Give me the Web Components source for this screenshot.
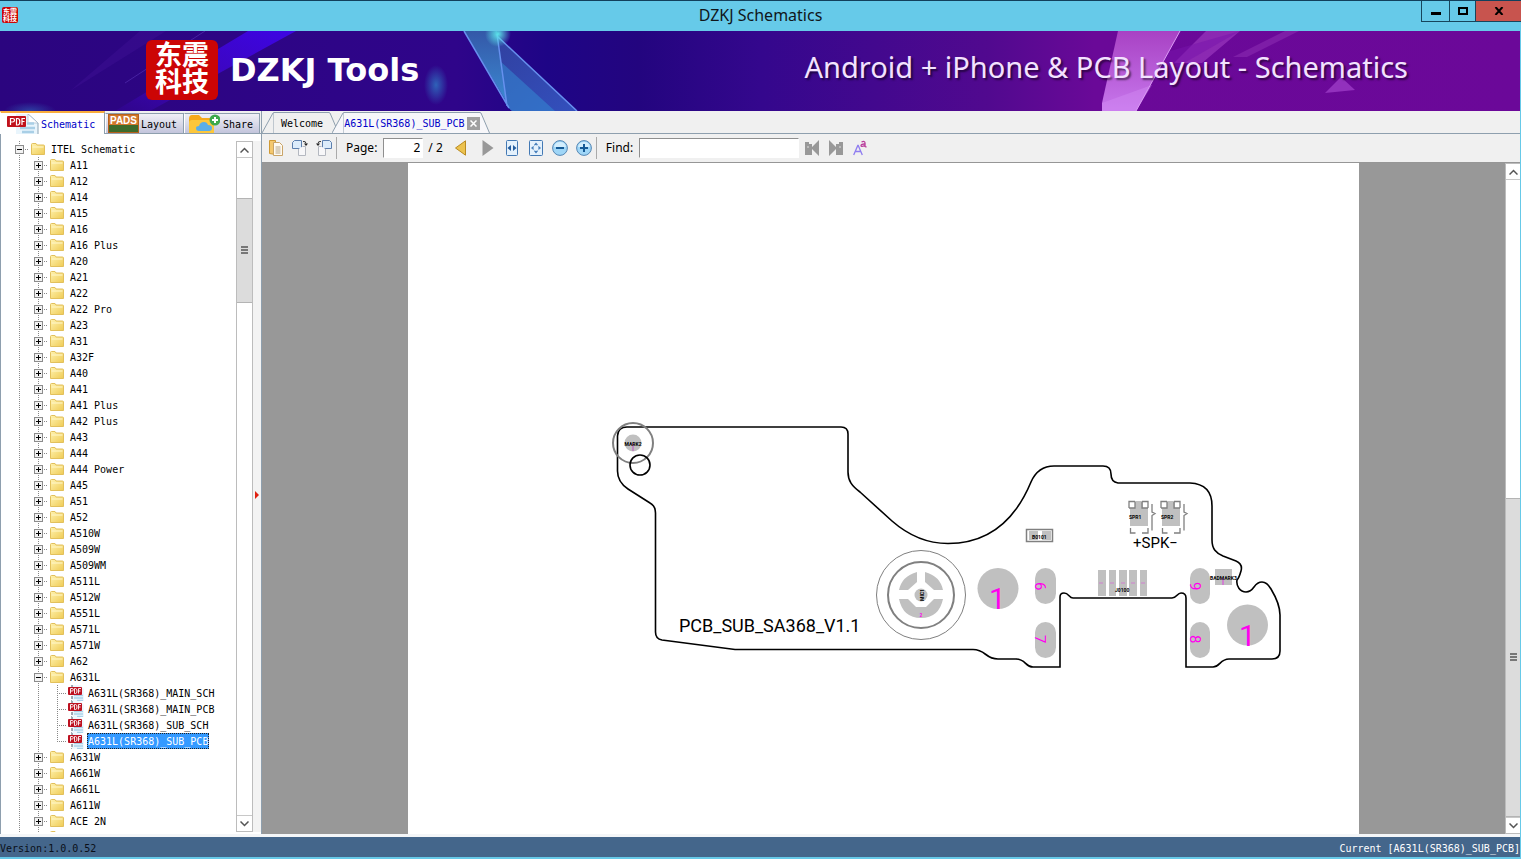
<!DOCTYPE html>
<html lang="en">
<head>
<meta charset="utf-8">
<title>DZKJ Schematics</title>
<style>
html, body { margin: 0; height: 100%; }
body { font: 10px/16px "DejaVu Sans Mono", "Liberation Mono", monospace; color: #000; background: #66c9e8; overflow: hidden; }
</style>
</head>
<body>
<dz-app></dz-app>
<script>
const BASE = `<style>
*{box-sizing:border-box}
button{font:inherit;color:inherit;margin:0;padding:0;border:0;background:none;display:flex;align-items:center;justify-content:center}
svg{display:block;flex:none}
</style>`;
function define(name, html, setup) {
  const t = document.createElement('template');
  t.innerHTML = BASE + html;
  customElements.define(name, class extends HTMLElement {
    connectedCallback() {
      if (this.shadowRoot) return;
      this.attachShadow({ mode: 'open' }).append(t.content.cloneNode(true));
      if (setup) setup.call(this, this.shadowRoot);
    }
  });
}

/* Icons shared by the tabs, the tree and the toolbar */
const ICONS = {
  folder: `<svg width="14" height="14" viewBox="0 0 14 14"><defs><linearGradient id="f" x1="0" y1="0" x2="1" y2="1"><stop offset="0" stop-color="#fff3b0"/><stop offset="1" stop-color="#efcb55"/></linearGradient></defs><path d="M.5 12.500V2.500q0-1 1-1h3.500l1 1.500h6.500q1 0 1 1v8.500z" fill="url(#f)" stroke="#e2c05c"/><path d="M1.500 5h11" stroke="#fff7cc"/></svg>`,
  pdf: `<svg width="16" height="16" viewBox="0 0 16 16"><path d="M4 0h8l4 4v12H4z" fill="#eef7fd"/><path d="M4 0v2M4 11v3M3.500 15.500v.5" stroke="#456"/><path d="M6 10.500h9M6 13h9M9 15.500h6" stroke="#a9d3ea" stroke-width="1.500"/><rect x="0" y="2" width="14" height="8" rx="1" fill="#bd1120"/><path d="M2.500 8.500v-5h1.800q1 0 1 1.200t-1 1.300H2.500M6.500 3.500v5h1q1.500 0 1.500-2.500T7.500 3.500zM10.500 8.500v-5h2.500M10.500 6h2" fill="none" stroke="#fff" stroke-width=".9"/></svg>`,
  pdfbig: `<svg width="32" height="20" viewBox="0 0 32 20"><path d="M9 0h12l10 9v11H9z" fill="#e9f5fc"/><path d="M21 0l10 9v11" fill="none" stroke="#8aa3b5"/><path d="M21 0v9h10z" fill="#fff" stroke="#a8bccb" stroke-width=".7"/><path d="M20 9.500h7M13 14h15M15 18h12" stroke="#a9cfe6" stroke-width="2.500"/><rect x="0" y="2" width="19" height="11" rx="1" fill="#c1121c"/><path d="M3.500 11V4.500h2q2 0 2 1.700T5.500 8h-2M9.500 4.500V11h1.300q2 0 2-3.200t-2-3.300zM15 11V4.500h3M15 7.500h2.500" fill="none" stroke="#fff" stroke-width="1.200"/></svg>`,
  share: `<svg width="31" height="19" viewBox="0 0 31 19"><path d="M0 19V5q0-4 3-4h7l3 3h8q4 0 4 4v11z" fill="#f6a91b"/><path d="M0 19V9q0-3 3-3h19q3 0 3 3v10z" fill="#fdc73a"/><path d="M10 17q-3 0-3-3 0-2 3-2 1-4 5-4 3 0 4 3 4 0 4 3t-3 3z" fill="#5aaee8"/><circle cx="26" cy="6" r="5.500" fill="#3da94a"/><path d="M26 3v6M23 6h6" stroke="#fff" stroke-width="2"/></svg>`,
  copy: `<svg width="16" height="18" viewBox="0 0 16 18"><path d="M1.500 1.500h6v14l-6-1z" fill="#f4c86e" stroke="#cf9a35"/><path d="M5.500 3.500h6l3 3v10h-9z" fill="#fffaf0" stroke="#c9a468"/><path d="M7.500 8h5M7.500 10h5M7.500 12h5M7.500 14h5" stroke="#b3a58c"/></svg>`,
  rotl: `<svg width="18" height="18" viewBox="0 0 18 18"><path d="M1.500 3.500 3.500 1.500h7v8h-9z" fill="#dcecfb" stroke="#5c7fae"/><path d="M7.500 10v6.500h7v-9h-3" fill="#f7f7f9" stroke="#b4b8c0"/><path d="M12 2.500q3-.5 3 2" fill="none" stroke="#333"/><path d="m13 4.500h4l-2 2.500z" fill="#222"/></svg>`,
  rotr: `<svg width="18" height="18" viewBox="0 0 18 18"><path d="M7.500 1.500h7l2 2v6h-9z" fill="#dcecfb" stroke="#5c7fae"/><path d="M6.500 7.500h-3v9h7V10" fill="#f7f7f9" stroke="#b4b8c0"/><path d="M6 2.500q-3-.5-3 2" fill="none" stroke="#333"/><path d="m1 4.500h4L3 7z" fill="#222"/></svg>`,
  prev: `<svg width="13" height="16" viewBox="0 0 13 16"><path d="M1.500 8 11.500.8v14.400z" fill="#ecc24f" stroke="#b98b22"/></svg>`,
  next: `<svg width="12" height="16" viewBox="0 0 12 16"><path d="M.5 0 11.500 8 .5 16z" fill="#989898"/></svg>`,
  fitw: `<svg width="12" height="16" viewBox="0 0 12 16"><rect x=".5" y=".5" width="11" height="15" rx="1" fill="#e4f1fc" stroke="#4379b4"/><path d="M5 5v6L1.500 8zM7 5v6l3.500-3z" fill="#245d9e"/></svg>`,
  fitp: `<svg width="14" height="16" viewBox="0 0 14 16"><rect x=".5" y=".5" width="13" height="15" rx="1" fill="#e4f1fc" stroke="#4379b4"/><path d="M7 2.500 9 5H5zM7 13.500 9 11H5zM2 8l2.500-2v4zM12 8 9.500 6v4z" fill="#3b76b5"/><circle cx="7" cy="8" r="3" fill="none" stroke="#6fa0d0" stroke-dasharray="1 1"/></svg>`,
  minus: `<svg width="16" height="16" viewBox="0 0 16 16"><circle cx="8" cy="8" r="7.400" fill="#9fd6f7" stroke="#5687b4"/><path d="M2 7q1-5 6-5t6 5z" fill="#d3eefd"/><path d="M4 8h8" stroke="#155a96" stroke-width="2"/></svg>`,
  plus: `<svg width="16" height="16" viewBox="0 0 16 16"><circle cx="8" cy="8" r="7.400" fill="#9fd6f7" stroke="#5687b4"/><path d="M2 7q1-5 6-5t6 5z" fill="#d3eefd"/><path d="M4 8h8M8 4v8" stroke="#155a96" stroke-width="2"/></svg>`,
  findp: `<svg width="16" height="16" viewBox="0 0 16 16"><path d="M1 15V2h4v2h3v3l7-7v16L8 9v6z" fill="#989898"/><path d="M4 6v2" stroke="#ddd"/></svg>`,
  findn: `<svg width="16" height="16" viewBox="0 0 16 16"><path d="M15 15V2h-4v2H8v3L1 0v16l7-7v6z" fill="#989898"/><path d="M12 6v2" stroke="#ddd"/></svg>`,
  kase: `<svg width="14" height="16" viewBox="0 0 14 16"><path d="M.7 15 4.800 5.500h.4L9.300 15M2.500 11.500h5" fill="none" stroke="#8f7df0" stroke-width="1.300"/><path d="M8.500 2q3.500-1.500 3.500 1v4M12 4q-4-.2-4 1.500T12 5.500M12 6.500l1.500.7" fill="none" stroke="#b83a9a" stroke-width="1.300"/></svg>`
};
define('dz-icon', `<style>:host{display:block;flex:none}</style><span></span>`, function (r) {
  r.querySelector('span').innerHTML = ICONS[this.getAttribute('name')] || '';
});

/* Red seal with the four characters of the company name */
define('dz-seal', `<style>
:host{display:grid;place-items:center;flex:none;width:72px;height:60px;border-radius:6px;background:#cc0505;color:#fff;font:bold 27px/27px "Liberation Sans","Noto Sans CJK SC",sans-serif;text-align:center}
:host([small]){width:16px;height:16px;border-radius:2px;font-size:7px;line-height:7px}
</style><div>东震<br>科技</div>`);

define('dz-titlebar', `<style>
:host{display:grid;grid-template-columns:1fr auto 1fr;height:31px;flex:none;border-top:1px solid #12405c;background:#66cae9}
dz-seal{margin:6px 0 0 2px}
h1{margin:0;font:16px/28px "Noto Sans","Open Sans",sans-serif;color:#10161a}
.btns{display:flex;justify-self:end;height:21px}
.btns button{width:28px;border:1px solid #17455c;border-top:0;border-right:0;height:21px}
.btns .max{width:26px}.btns .close{width:46px;background:#c8544e}
</style>
<div><dz-seal small></dz-seal></div><h1>DZKJ Schematics</h1>
<div class="btns">
<button aria-label="Minimize"><svg width="10" height="10"><path d="M0 6h10v3H0z"/></svg></button>
<button class="max" aria-label="Maximize"><svg width="10" height="8"><path d="M1 1h8v6H1z" fill="none" stroke="#000" stroke-width="2"/></svg></button>
<button class="close" aria-label="Close"><svg width="10" height="8" viewBox="0 0 10 8"><path d="M1.500 0l7 8M8.500 0l-7 8" stroke="#000" stroke-width="2"/></svg></button>
</div>`);

define('dz-banner', `<style>
:host{display:grid;height:80px;flex:none;overflow:hidden;margin-right:1px;color:#fff}
:host>*{grid-area:1/1}
.bg{width:100%;height:80px}
.row{display:flex;align-items:center;padding:0 112px 2px 146px;z-index:1}
.brand{font:bold 32px/40px "DejaVu Sans","Open Sans",sans-serif;margin-left:12px;flex:1}
.tag{font:29px/40px "Noto Sans","Open Sans",sans-serif;color:#f3e2ff;text-shadow:2px 2px 2px #0008;padding-bottom:6px}
</style>
<svg class="bg" viewBox="0 0 1520 80" preserveAspectRatio="none" aria-hidden="true">
<defs>
<linearGradient id="g"><stop offset="0" stop-color="#2b057f"/><stop offset=".3" stop-color="#2f058a"/><stop offset=".36" stop-color="#1e0586"/><stop offset=".42" stop-color="#23057f"/><stop offset=".5" stop-color="#34078d"/><stop offset=".65" stop-color="#51098f"/><stop offset=".72" stop-color="#6a0998"/><stop offset="1" stop-color="#6b0899"/></linearGradient>
<linearGradient id="t" x1="0" y1="0" x2="0" y2="1"><stop offset="0" stop-color="#3458a8"/><stop offset="1" stop-color="#3c8fd6"/></linearGradient>
<linearGradient id="t2" x1="0" y1="0" x2="1" y2="1"><stop offset="0" stop-color="#3140a0"/><stop offset="1" stop-color="#3350bd"/></linearGradient>
<linearGradient id="p" x1="0" y1="0" x2="0" y2="1"><stop offset="0" stop-color="#a842c4"/><stop offset="1" stop-color="#c777ec"/></linearGradient>
<linearGradient id="b" x1="1" y1="0" x2="0" y2="1"><stop offset="0" stop-color="#3d05e4"/><stop offset=".6" stop-color="#3c06b8"/><stop offset="1" stop-color="#2f058a"/></linearGradient>
<radialGradient id="r"><stop offset="0" stop-color="#2f79c4"/><stop offset="1" stop-color="#2f79c4" stop-opacity="0"/></radialGradient>
<radialGradient id="c"><stop offset="0" stop-color="#5be4ea"/><stop offset="1" stop-color="#5be4ea" stop-opacity="0"/></radialGradient>
</defs>
<path fill="url(#g)" d="M0 0h1520v80H0z"/>
<path d="M248 0h48L150 80h-35z" fill="url(#b)"/>
<path d="M140 0h26L70 60z" fill="#4a18a0" opacity=".3"/><path d="M205 0 125 52" stroke="#5a35b8" opacity=".6"/>
<ellipse cx="436" cy="54" rx="12" ry="20" fill="url(#r)" opacity=".8"/><ellipse cx="30" cy="80" rx="26" ry="9" fill="url(#r)" opacity=".5"/>
<path d="M464 0h33l10 75 5 5z" fill="url(#t)"/><path d="M497 5 577 80h-65l-5-5z" fill="url(#t2)"/><path d="M500 30 555 80h-43l-5-5z" fill="#338fd6" opacity=".5"/>
<path d="M464 0 509 77M497 3l10 72M497 5l80 75" stroke="#6690ee" fill="none" stroke-width="1.500"/>
<circle cx="498" cy="3" r="13" fill="url(#c)"/>
<path d="M1206 0h34l-38 32-28 0z" fill="#9a38bd" opacity=".7"/><path d="M1285 0h14l-52 26h-14z" fill="#8a2bb0" opacity=".6"/>
<path d="M1170 20 1118 70 1240 0z" fill="#7714ab" opacity=".5"/>
<path d="M1118 0h62l-44 80h-34v-8z" fill="url(#p)"/><path d="M1102 72l50-18-16 26h-34z" fill="#d48ff5" opacity=".4"/><path d="M1180 0l-44 80" stroke="#dc9bf5"/>
<path d="M1341 46l14 13-30 3z" fill="#9231bd"/>
</svg>
<div class="row"><dz-seal></dz-seal><div class="brand">DZKJ Tools</div><div class="tag">Android + iPhone &amp; PCB Layout - Schematics</div></div>`);

define('dz-side-tabs', `<style>
:host{display:flex;align-items:flex-end;height:23px;flex:none;border-bottom:1px solid #8e9fae;background:#f0f0f0}
button{height:20px;border:1px solid #8e9fae;border-bottom:0;border-left-color:#fff;background:linear-gradient(#f0f0f6,#c3c5dc);line-height:19px;overflow:hidden;justify-content:flex-start}
button.on{height:23px;width:105px;margin-bottom:-1px;border-top:2px solid #f9ac3c;background:#fff;color:#0000c8;padding-left:6px;gap:2px}
.w{padding-top:2px}
.l{width:79px;padding-left:2px;gap:2px}.s{width:76px;padding-left:4px;gap:3px}
.pads{width:31px;height:19px;background:linear-gradient(#d2772b 60%,#3d6b2c 60%);border:1px solid #b5601c;color:#fff;font:bold 10px/11px "Liberation Sans",sans-serif;text-align:center}
</style>
<button class="on"><dz-icon name="pdfbig"></dz-icon><span class="w">Schematic</span></button><button class="l"><span class="pads">PADS</span><span class="w">Layout</span></button><button class="s"><dz-icon name="share"></dz-icon><span class="w">Share</span></button>`);

/* Scroll bar: before / thumb / after are the shares of the track */
define('dz-scrollbar', `<style>
:host{display:flex;flex-direction:column;flex:none;width:17px;background:#fff;border:1px solid #bcbcbc}
button{height:15px;flex:none;background:#fff}
.thumb{background:#dcdcdc;border:solid #b4b4b4;border-width:1px 0;display:grid;place-items:center}
.track{flex:1;display:flex;flex-direction:column;border:solid #c8c8c8;border-width:1px 0}
</style>
<button aria-label="Scroll up"><svg width="9" height="6"><path d="M.5 5.500 4.500 1.500l4 4" fill="none" stroke="#555" stroke-width="1.500"/></svg></button>
<div class="track"><i></i><div class="thumb"><svg width="7" height="8"><path d="M0 1h7M0 4h7M0 7h7" stroke="#555" stroke-width="1.500"/></svg></div><i></i></div>
<button aria-label="Scroll down"><svg width="9" height="6"><path d="M.5.5l4 4 4-4" fill="none" stroke="#555" stroke-width="1.500"/></svg></button>`, function (r) {
  const share = this.getAttribute('shares').split(' ');
  [...r.querySelector('.track').children].forEach((e, i) => e.style.flex = share[i] + ' 0 0px');
});

define('dz-tree-row', `<style>
:host{display:flex;height:16px;padding-left:9px;white-space:nowrap;align-items:center}
.cell{width:19px;height:16px;flex:none;display:grid;place-items:center;background:repeating-linear-gradient(#888 0 1px,#0000 1px 2px) 9px 0/1px 16px no-repeat}
.cell:last-of-type{background:repeating-linear-gradient(#888 0 1px,#0000 1px 2px) 9px 0/1px 16px no-repeat,repeating-linear-gradient(90deg,#888 0 1px,#0000 1px 2px) 9px 8px/10px 1px no-repeat}
:host([last]) .cell:last-of-type{background-size:1px 9px,10px 1px}
.cell button{width:9px;height:9px;border:1px solid #8c8c8c;background:#f2f2f2}
dz-icon{margin:0 5px 0 2px}
:host([level="2"]) dz-icon{margin:0 3px 0 1px}
span{padding:2px 1px 0;line-height:14px}
:host([selected]) span{background:#3399ff;color:#fff;outline:1px dotted #222;outline-offset:-1px}
</style>`, function (r) {
  const level = +this.getAttribute('level'), label = this.getAttribute('label');
  for (let i = 0; i <= level; i++) {
    const c = document.createElement('div');
    c.className = 'cell';
    if (i === level && level < 2) c.innerHTML = `<button aria-label="Toggle ${label}"><svg width="5" height="5"><path d="M0 2.500h5${this.hasAttribute('open') ? '' : 'M2.500 0v5'}" stroke="#000"/></svg></button>`;
    r.append(c);
  }
  const icon = document.createElement('dz-icon');
  icon.setAttribute('name', level === 2 ? 'pdf' : 'folder');
  const s = document.createElement('span');
  s.textContent = label;
  r.append(icon, s);
});

define('dz-tree', `<style>
:host{display:block;flex:1;min-width:0;overflow:hidden;background:#fff}
</style>`, function (r) {
  const add = (level, label, ...flags) => {
    const e = document.createElement('dz-tree-row');
    e.setAttribute('level', level); e.setAttribute('label', label);
    flags.forEach(f => e.setAttribute(f, ''));
    r.append(e);
  };
  add(0, 'ITEL Schematic', 'open');
  'A11,A12,A14,A15,A16,A16 Plus,A20,A21,A22,A22 Pro,A23,A31,A32F,A40,A41,A41 Plus,A42 Plus,A43,A44,A44 Power,A45,A51,A52,A510W,A509W,A509WM,A511L,A512W,A551L,A571L,A571W,A62'.split(',').forEach(n => add(1, n));
  add(1, 'A631L', 'open');
  add(2, 'A631L(SR368)_MAIN_SCH');
  add(2, 'A631L(SR368)_MAIN_PCB');
  add(2, 'A631L(SR368)_SUB_SCH');
  add(2, 'A631L(SR368)_SUB_PCB', 'selected', 'last');
  'A631W,A661W,A661L,A611W,ACE 2N'.split(',').forEach(n => add(1, n));
  add(1, '');
});

define('dz-doc-tab', `<style>
:host{display:flex;height:21px;margin-right:-7px;color:#000}
:host([active]){color:#0000c8;--fill:#f7f7fa;z-index:1}
.mid{border-top:1px solid #8e9fae;background:var(--fill,#f0f0f0);height:21px;display:flex;align-items:center;gap:2px}
.name{line-height:18px;padding-top:2px}
:host(:not([active])) .mid{padding:0 6px 0 7px}
svg.e path{fill:var(--fill,#f0f0f0);stroke:#8e9fae}
.x{width:13px;height:13px;background:#a0a0a0;display:none}
:host([active]) .x{display:flex}
</style>
<svg class="e" width="12" height="21"><path d="M0 21 11 1q1-.5 1-.5V21"/></svg>
<div class="mid"><button class="name"><slot></slot></button><button class="x" aria-label="Close tab"><svg width="7" height="7"><path d="M.5.5l6 6M6.500.5l-6 6" stroke="#fff" stroke-width="1.500"/></svg></button></div>
<svg class="e" width="10" height="21"><path d="M0 21V.5L1 1 9.500 21" style="stroke:none"/><path d="M0 .5 1 1 9.500 21" style="fill:none"/></svg>`);

define('dz-doc-tabs', `<style>
:host{display:flex;align-items:flex-end;height:23px;flex:none;background:#f0f0f0;border-bottom:1px solid #8e9fae}
</style><dz-doc-tab>Welcome</dz-doc-tab><dz-doc-tab active>A631L(SR368)_SUB_PCB</dz-doc-tab>`);

define('dz-toolbar', `<style>
:host{display:flex;align-items:center;height:28px;flex:none;background:#f0f0f0;font:12px/20px "Noto Sans","Open Sans",sans-serif;padding-left:2px}
button{width:24px;height:24px}
i{width:1px;height:22px;background:#aaa;margin-right:9px}
input{font:inherit;height:20px;border:1px solid;border-color:#8f8f8f #fff #fff #8f8f8f;background:#fff;padding:0 2px;border-radius:0;margin:0 5px 0 6px}
#page{width:40px;text-align:right}#find{width:160px;margin-right:1px}
.prev{width:30px;margin-left:3px}
</style>
<button aria-label="Copy"><dz-icon name="copy"></dz-icon></button><button aria-label="Rotate left"><dz-icon name="rotl"></dz-icon></button><button aria-label="Rotate right"><dz-icon name="rotr"></dz-icon></button><i></i>
<label for="page">Page:</label><input id="page" value="2"><span>/ 2</span>
<button class="prev" aria-label="Previous page"><dz-icon name="prev"></dz-icon></button><button aria-label="Next page"><dz-icon name="next"></dz-icon></button>
<button aria-label="Fit width"><dz-icon name="fitw"></dz-icon></button><button aria-label="Fit page"><dz-icon name="fitp"></dz-icon></button><button aria-label="Zoom out"><dz-icon name="minus"></dz-icon></button><button aria-label="Zoom in"><dz-icon name="plus"></dz-icon></button><i></i>
<label for="find">Find:</label><input id="find">
<button aria-label="Find previous"><dz-icon name="findp"></dz-icon></button><button aria-label="Find next"><dz-icon name="findn"></dz-icon></button><button aria-label="Match case"><dz-icon name="kase"></dz-icon></button>`);

/* Board drawing, in the coordinates of its page */
define('dz-board', `<style>
:host{display:block;background:#fff;height:100%}
svg{width:100%;height:100%}
text{font-family:Roboto,"Liberation Sans",sans-serif}
.m{fill:#f0e}.pad{fill:#c0c0c0}.k{fill:none;stroke:#000;stroke-width:1.600}.g{fill:none;stroke:#808080}
.t{font-size:5px;font-weight:bold}
</style>
<svg viewBox="408 163 951 671" preserveAspectRatio="xMidYMin meet">
<path class="k" d="M627 427H841Q848 427 848 434V472C848 481 852 486 860 492L892 521C908 535 928 543.500 948 543.500C990 543.500 1016 518 1031 482Q1038 466 1054 466H1103Q1111 466 1111 474T1118 483H1190Q1212 484 1212 506V540C1212 549 1216 553 1223 556L1236 561Q1243 564 1241 571T1237 580C1236 586 1240 592 1246 592C1255 592 1253 582 1262 582Q1267 582 1271 589Q1280 604 1280 615V651Q1280 659 1272 659H1229C1220 659 1220 667 1213 667H1186V598Q1186 593 1181 593C1177 593 1177 598 1172 598H1073C1069 598 1069 593 1064 593Q1060 593 1060 597V667H1033C1025 667 1026 659 1016 659H998C985 659 986 649.500 973 649.500H735L662 640Q655.500 639 655.500 632V513Q655.500 506 650 503L628 489Q617.500 482 617.500 471V436Q618 427 627 427Z"/>
<circle class="pad" cx="633" cy="443" r="8.500"/><circle class="g" cx="633" cy="443" r="20" stroke-width="2"/><circle class="k" cx="640" cy="465" r="10"/>
<path d="M633 443v8" stroke="#c050c0"/><text class="t" x="624.500" y="446">MARK2</text>
<circle class="g" cx="921" cy="595" r="44.500"/><circle class="g" cx="921" cy="595" r="33" stroke-width="2"/>
<path class="pad" d="M917 572v10l-9 8H899Q902 576 917 572zM925 572v10l9 8h9Q940 576 925 572zM899 599h9l8 8h10l8-8h9Q939 618 921 618T899 599z"/><circle class="pad" cx="921" cy="595" r="6.500"/>
<text class="t" transform="translate(924 601) rotate(-90)">MIC1</text><text class="m t" x="919.500" y="617">2</text>
<circle class="pad" cx="998" cy="588.500" r="20.500"/><circle class="pad" cx="1247.500" cy="625" r="20.500"/>
<g class="pad"><rect x="1035" y="568" width="21" height="36" rx="10.500"/><rect x="1035" y="622" width="21" height="36" rx="10.500"/><rect x="1190" y="568" width="20" height="36" rx="10"/><rect x="1190" y="622" width="20" height="36" rx="10"/>
<rect x="1098" y="570" width="8" height="26"/><rect x="1109" y="570" width="7" height="26"/><rect x="1119" y="570" width="8" height="26"/><rect x="1129" y="570" width="8" height="26"/><rect x="1140" y="570" width="7" height="26"/>
<rect x="1215" y="569" width="17" height="16"/><path d="M1130 508h5v-7h8v7h5v18h-18zM1162 508h5v-7h8v7h5v18h-18z"/></g>
<path d="M1099 583h4M1110 583h4M1121 583h4M1131 583h4M1141 583h4" stroke="#d080d0"/>
<g class="m" font-size="30"><text x="989" y="609">1</text><text x="1239" y="646">1</text></g>
<g class="m" font-size="15"><text transform="translate(1035 582) rotate(90)">6</text><text transform="translate(1035 635) rotate(90)">7</text><text transform="translate(1190 582) rotate(90)">9</text><text transform="translate(1190 635) rotate(90)">8</text></g>
<rect class="g" x="1026.500" y="529.500" width="26" height="12" stroke-width="1.500"/><path class="pad" d="M1029 531h9v9h-9zM1042 531h9v9h-9z"/><text class="t" x="1032" y="539">B0101</text>
<g class="g" stroke-width="1.300"><path id="sp" d="M1129 508v-6.500h6M1142 501.500h6v6.500M1129 508h6v-6M1148 508h-6v-6M1130.500 528v5h5M1142 533h6v-5M1152 504v8l3 1.500-3 2v15"/><use href="#sp" x="32"/></g>
<text class="t" x="1129" y="519">SPR1</text><text class="t" x="1161" y="519">SPR2</text>
<path d="M1223 578v7" stroke="#e040e0"/><text class="t" x="1210" y="580">BADMARK3</text><text class="t" x="1115" y="592">J0100</text>
<text x="1133" y="548" font-size="15">+SPK−</text>
<text x="679" y="632" font-size="18">PCB_SUB_SA368_V1.1</text>
</svg>`);

define('dz-viewer', `<style>
:host{display:flex;flex:1;min-height:0;border-top:1px solid #969696;background:#989898}
.view{flex:1;min-width:0;padding:0 146px;overflow:hidden}
dz-scrollbar{width:15px;border-right:0}
</style><div class="view"><dz-board></dz-board></div><dz-scrollbar shares="321 321 0"></dz-scrollbar>`);

define('dz-status', `<style>
:host{display:flex;justify-content:space-between;height:20px;flex:none;background:#44668b;margin:0 1px 2px 0;padding-top:4px;color:#0a0f18}
.cur{color:#fff}
</style><span>Version:1.0.0.52</span><span class="cur">Current [A631L(SR368)_SUB_PCB]</span>`);

define('dz-app', `<style>
:host{display:flex;flex-direction:column;height:100vh;background:#66c9e8}
main{flex:1;min-height:0;display:flex;margin-right:1px;background:#f4f6f8;padding-bottom:3px}
aside{width:262px;flex:none;display:flex;flex-direction:column;background:#fff;border-right:1px solid #8e9fae}
.panel{flex:1;min-height:0;display:flex;padding:7px 0 2px;border-left:1px solid #8e9fae}
.split{width:8px;flex:none;display:flex;align-items:center;background:#f3f3f3;justify-content:center;padding-top:16px}
section{flex:1;min-width:0;display:flex;flex-direction:column}
</style>
<dz-titlebar></dz-titlebar><dz-banner></dz-banner>
<main>
<aside><dz-side-tabs></dz-side-tabs><div class="panel"><dz-tree></dz-tree><dz-scrollbar shares="40 103 514"></dz-scrollbar><div class="split"><svg width="4" height="8"><path d="M0 0l4 4-4 4z" fill="#e02010"/></svg></div></div></aside>
<section><dz-doc-tabs></dz-doc-tabs><dz-toolbar></dz-toolbar><dz-viewer></dz-viewer></section>
</main>
<dz-status></dz-status>`);
</script>
</body>
</html>
